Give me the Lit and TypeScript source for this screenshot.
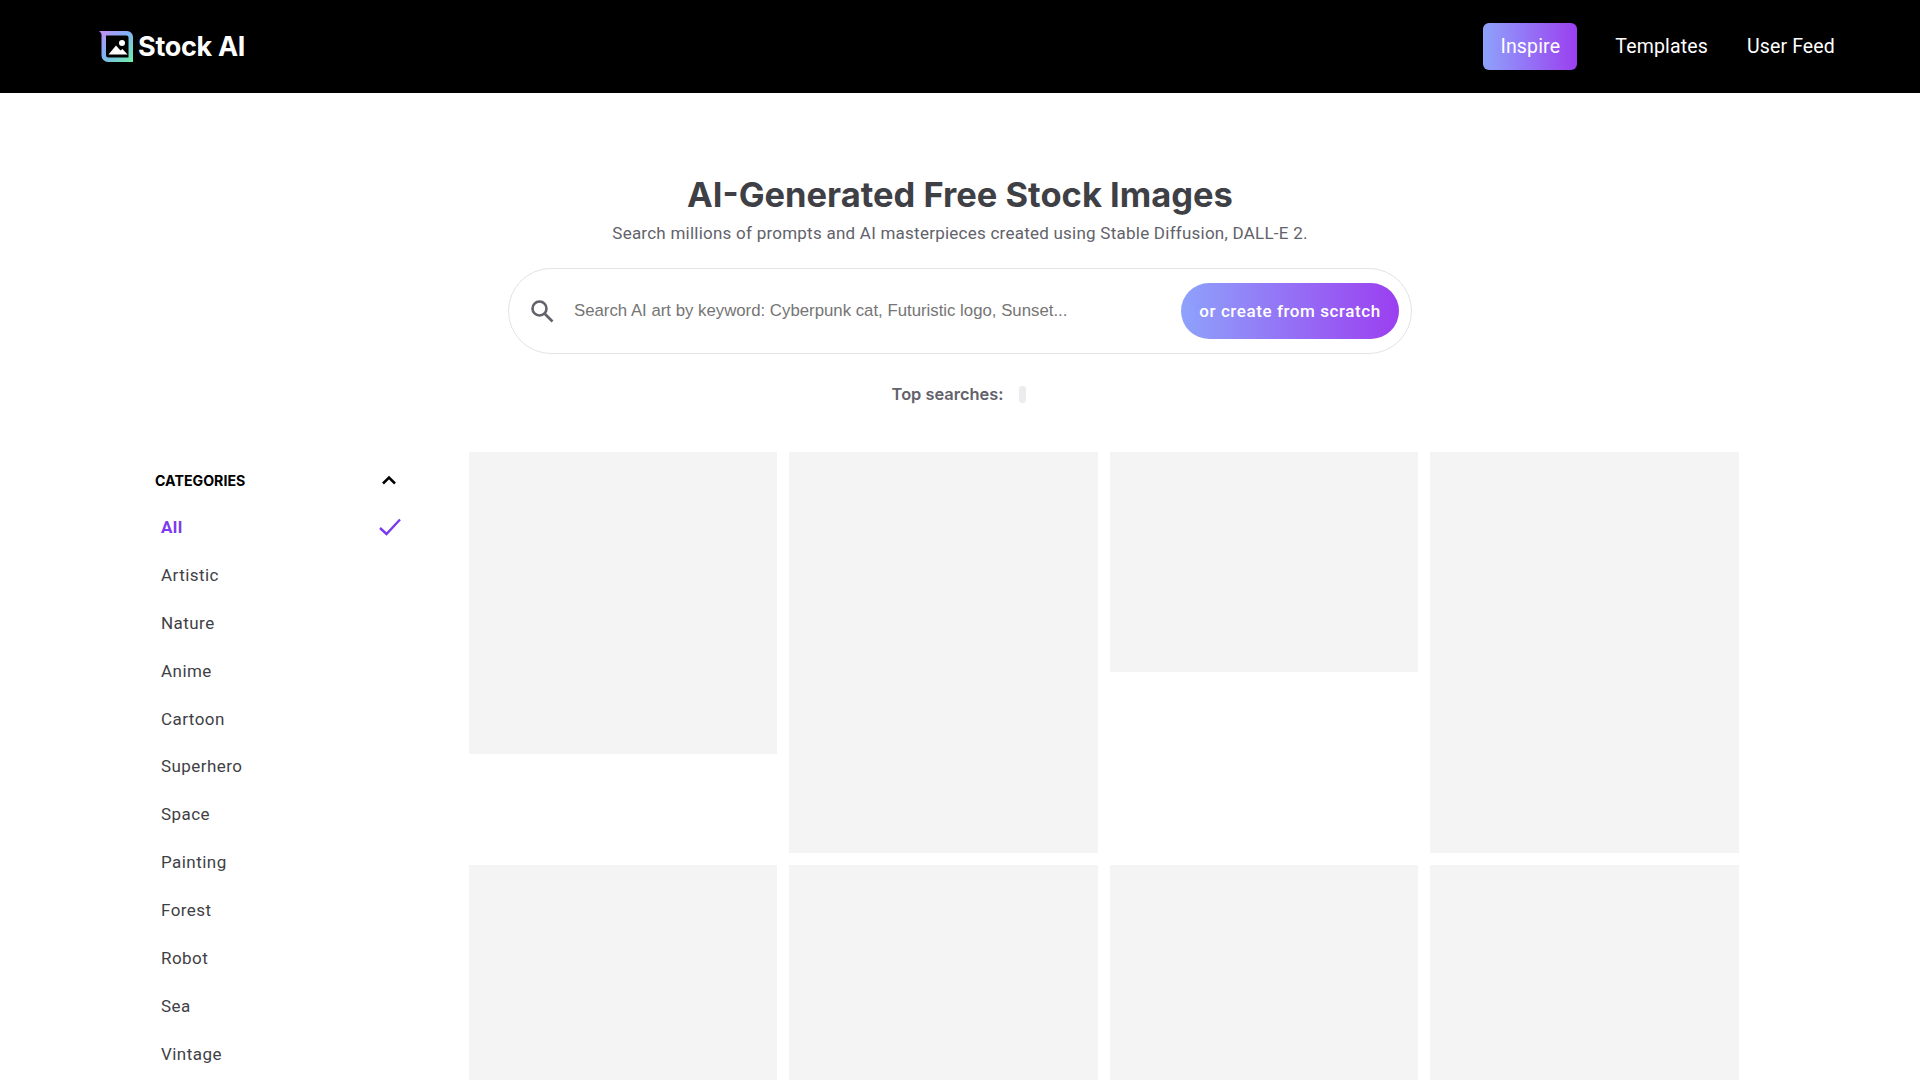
import { LitElement, html, css } from "lit";
import { customElement } from "lit/decorators.js";

const CATS = ["All","Artistic","Nature","Anime","Cartoon","Superhero","Space","Painting","Forest","Robot","Sea","Vintage"];
const TILES = [302,401,220,401,401,401,401,401];

@customElement("app-root")
export class AppRoot extends LitElement {
  static styles = css`
    :host { display: block; height: 1080px; overflow: hidden; background: #fff; font-family: Roboto, "Liberation Sans", sans-serif; color: #3f3f46; }
    header { height: 93px; box-sizing: border-box; background: #000; display: flex; align-items: center; justify-content: space-between; padding: 0 85px 0 99px; }
    .brand { display: flex; align-items: center; gap: 5px; color: #fff; font: 700 27px Inter, sans-serif; letter-spacing: -0.3px; }
    nav { display: flex; align-items: center; gap: 39px; color: #fff; font-size: 19.5px; letter-spacing: .15px; }
    .inspire { width: 94px; height: 47px; border-radius: 6px; display: flex; align-items: center; justify-content: center; background: linear-gradient(90deg,#8ea2fb,#9b3ff0); margin-right: -1px; }
    .hero { display: flex; flex-direction: column; align-items: center; padding-top: 81px; }
    h1 { margin: 0; font: 700 34.5px/42px Inter, sans-serif; color: #3f3f46; letter-spacing: 0; }
    .sub { margin-top: 6px; font-size: 17px; line-height: 22px; color: #62626b; letter-spacing: .24px; }
    .search { margin-top: 24px; width: 904px; height: 86px; box-sizing: border-box; border: 1px solid #e3e3e6; border-radius: 43px; display: flex; align-items: center; padding: 0 12px 0 20px; }
    .search svg { flex: none; }
    .ph { flex: 1; margin-left: 19px; font: 16.8px "Liberation Sans", sans-serif; color: #757575; }
    .cta { width: 218px; height: 56px; border-radius: 28px; background: linear-gradient(90deg,#8ea2fb,#9b3ff0); color: #fff; display: flex; align-items: center; justify-content: center; font-size: 17px; font-weight: 500; letter-spacing: .57px; }
    .top { margin-top: 28px; height: 24px; display: flex; align-items: center; gap: 16px; font: 600 16.4px Inter, sans-serif; color: #62626b; }
    .top i { width: 7px; height: 17px; margin-right: 2px; background: #ececee; border-radius: 3px; }
    main { display: flex; margin-top: 46px; padding-left: 155px; }
    aside { width: 313.5px; flex: none; padding-top: 10px; box-sizing: border-box; }
    .head { width: 247px; display: flex; align-items: center; justify-content: space-between; height: 36px; margin-bottom: 5px; font: 700 14.2px Inter, sans-serif; color: #000; }
    .cat { width: 247px; box-sizing: border-box; height: 47.9px; padding-left: 6px; display: flex; align-items: center; justify-content: space-between; font-size: 17px; letter-spacing: .45px; color: #3f3f46; }
    .cat.on { color: #7c3aed; font-weight: 700; }
    .head svg { margin-right: 5px; }
    .cat svg { margin-right: 1px; }
    .grid { display: grid; grid-template-columns: repeat(4, 308.5px); gap: 12px 12px; align-items: start; }
    .tile { background: #f4f4f4; }
  `;

  render() {
    return html`
      <header>
        <div class="brand">
          <svg width="34" height="31" viewBox="0 0 34 31">
            <defs><linearGradient id="lg" x1="0" y1="0" x2="1" y2="1"><stop offset="0" stop-color="#c98af5"/><stop offset=".45" stop-color="#7fb0f7"/><stop offset="1" stop-color="#6ff0a6"/></linearGradient></defs>
            <path d="M0 0H28a6 6 0 0 1 6 6V31H9a6.500 6.500 0 0 1-6.500-6.500V6A6 6 0 0 0 0 0zM7 4.500V24a2.500 2.500 0 0 0 2.500 2.500H29.500V6.500a2 2 0 0 0-2-2z" fill="url(#lg)" fill-rule="evenodd"/>
            <circle cx="23" cy="12" r="3" fill="#fff"/>
            <path d="M9.500 23.500l7.500-9 4.500 5 2-1.500 5 5.500z" fill="#fff"/>
          </svg>
          <span>Stock AI</span>
        </div>
        <nav><div class="inspire">Inspire</div><span>Templates</span><span>User Feed</span></nav>
      </header>
      <section class="hero">
        <h1>AI-Generated Free Stock Images</h1>
        <div class="sub">Search millions of prompts and AI masterpieces created using Stable Diffusion, DALL-E 2.</div>
        <div class="search">
          <svg width="26" height="26" viewBox="0 0 26 26" fill="none" stroke="#62626b" stroke-width="2.600"><circle cx="10.500" cy="10.500" r="7"/><path d="M15.500 15.500l8 8"/></svg>
          <div class="ph">Search AI art by keyword: Cyberpunk cat, Futuristic logo, Sunset...</div>
          <div class="cta">or create from scratch</div>
        </div>
        <div class="top"><span>Top searches:</span><i></i></div>
      </section>
      <main>
        <aside>
          <div class="head"><span>CATEGORIES</span>
            <svg width="16" height="10" viewBox="0 0 16 10" fill="none" stroke="#000" stroke-width="2.500"><path d="M2 8.500l6-6 6 6"/></svg>
          </div>
          ${CATS.map((c, i) => html`<div class="cat ${i === 0 ? "on" : ""}"><span>${c}</span>${i === 0 ? html`<svg width="22" height="18" viewBox="0 0 22 18" fill="none" stroke="#7c3aed" stroke-width="2.400"><path d="M1 10l6.500 6L21 1.500"/></svg>` : ""}</div>`)}
        </aside>
        <div class="grid">
          ${TILES.map(h => html`<div class="tile" style="height:${h}px"></div>`)}
        </div>
      </main>
    `;
  }
}
